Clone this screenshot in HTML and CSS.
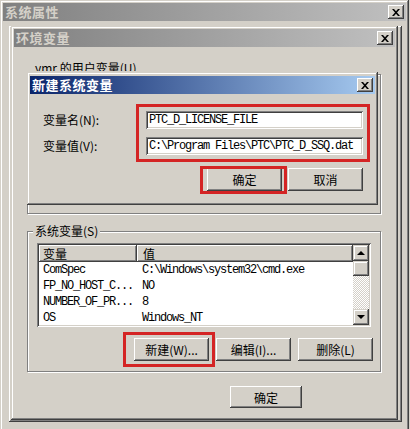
FILE: index.html
```html
<!DOCTYPE html>
<html lang="zh-CN">
<head>
<meta charset="utf-8">
<title>环境变量</title>
<link rel="stylesheet" href="styles.css">
</head>
<body>
<div class="win outer">
  <div class="title inactive"><span class="ttext">系统属性</span><span class="xbtn"><svg width="8" height="7" viewBox="0 0 8 7"><path d="M0 0h2l2 2.2L6 0h2L5 3.5 8 7H6L4 4.8 2 7H0l3-3.5z" fill="#000"/></svg></span></div>
  <div class="outer-body"><div class="tabpanel"></div></div>
</div>

<div class="win env">
  <div class="title inactive"><span class="ttext">环境变量</span><span class="xbtn"><svg width="8" height="7" viewBox="0 0 8 7"><path d="M0 0h2l2 2.2L6 0h2L5 3.5 8 7H6L4 4.8 2 7H0l3-3.5z" fill="#000"/></svg></span></div>
  <div class="env-body">
    <div class="group user">
      <span class="legend">ymr 的用户变量(U)</span>
    </div>
    <div class="group sys">
      <span class="legend">系统变量(S)</span>
      <div class="list">
        <div class="list-main">
          <div class="hdr">
            <div class="hcell c1">变量</div>
            <div class="hcell c2">值</div>
          </div>
          <div class="row"><span class="c1 mono">ComSpec</span><span class="c2 mono">C:\Windows\system32\cmd.exe</span></div>
          <div class="row"><span class="c1 mono">FP_NO_HOST_C...</span><span class="c2 mono">NO</span></div>
          <div class="row"><span class="c1 mono">NUMBER_OF_PR...</span><span class="c2 mono">8</span></div>
          <div class="row"><span class="c1 mono">OS</span><span class="c2 mono">Windows_NT</span></div>
        </div>
        <div class="vscroll">
          <div class="sbtn"><span class="arr up"></span></div>
          <div class="thumb"></div>
          <div class="track"></div>
          <div class="sbtn"><span class="arr down"></span></div>
        </div>
      </div>
      <div class="btnrow">
        <div class="btn">新建<span class="half">(W)...</span></div>
        <div class="btn">编辑<span class="half">(I)...</span></div>
        <div class="btn">删除<span class="half">(L)</span></div>
      </div>
    </div>
    <div class="okrow"><div class="btn ok">确定</div></div>
  </div>
</div>

<div class="win dlg">
  <div class="title active"><span class="ttext">新建系统变量</span><span class="xbtn"><svg width="8" height="7" viewBox="0 0 8 7"><path d="M0 0h2l2 2.2L6 0h2L5 3.5 8 7H6L4 4.8 2 7H0l3-3.5z" fill="#000"/></svg></span></div>
  <div class="dlg-body">
    <div class="form">
      <label class="lbl">变量名<span class="half">(N):</span></label>
      <div class="input mono">PTC_D_LICENSE_FILE</div>
      <label class="lbl">变量值<span class="half">(V):</span></label>
      <div class="input mono">C:\Program Files\PTC\PTC_D_SSQ.dat</div>
    </div>
    <div class="dlg-btns">
      <div class="btn">确定</div>
      <div class="btn">取消</div>
    </div>
  </div>
</div>

<div class="mark m1"></div>
<div class="mark m2"></div>
<div class="mark m3"></div>
</body>
</html>
```

FILE: styles.css
```css
* { box-sizing: border-box; }
html, body { margin: 0; padding: 0; }
body {
  width: 410px;
  height: 429px;
  overflow: hidden;
  position: relative;
  background: #d4d0c8;
  font-family: "Noto Sans CJK SC", "Liberation Sans", sans-serif;
  font-size: 12px;
  color: #000;
}

/* classic window frame */
.win {
  position: absolute;
  background: #d4d0c8;
  padding: 3px;
  display: flex;
  flex-direction: column;
  box-shadow: inset -1px -1px #404040, inset 1px 1px #d4d0c8,
              inset -2px -2px #808080, inset 2px 2px #fff;
}
.outer { left: 0; top: 0; width: 409px; height: 431px; }
.env { left: 11px; top: 26px; width: 387px; height: 394px; }
.dlg { left: 27px; top: 72px; width: 351px; height: 133px; }
.dlg .title { margin-top: 1px; }

.title {
  flex: none;
  height: 18px;
  display: flex;
  align-items: center;
  justify-content: space-between;
  padding: 0 2px 0 2px;
}
.ttext { font-weight: bold; font-size: 13px; line-height: 18px; letter-spacing: 0.5px; }
.inactive { background: linear-gradient(90deg, #808080, #c0c0c0); color: #d4d0c8; }
.active { background: linear-gradient(90deg, #0a246a, #a6caf0); color: #fff; }

.xbtn {
  width: 16px;
  height: 14px;
  background: #d4d0c8;
  display: flex;
  align-items: center;
  justify-content: center;
  box-shadow: inset -1px -1px #404040, inset 1px 1px #fff, inset -2px -2px #808080;
}
.xbtn svg { display: block; }

.outer-body { flex: 1; padding: 5px 4px 6px 6px; display: flex; }
.tabpanel {
  flex: 1;
  box-shadow: inset -1px -1px #404040, inset 1px 1px #fff, inset -2px -2px #808080;
}

/* env body */
.env-body {
  flex: 1;
  display: flex;
  flex-direction: column;
  padding: 27px 14px 0 13px;
}
.group {
  position: relative;
  border: 1px solid #808080;
  box-shadow: inset 1px 1px #fff, 1px 1px #fff;
}
.legend {
  position: absolute;
  top: -9px;
  left: 5px;
  padding: 0 2px;
  background: #d4d0c8;
  line-height: 16px;
  white-space: nowrap;
}
.user { height: 140px; }
.user .legend { top: -15px; height: 11px; overflow: hidden; }
.sys {
  height: 141px;
  margin-top: 17px;
  padding: 11px 8px 0 9px;
  display: flex;
  flex-direction: column;
}

.mono {
  font-family: "Liberation Mono", "DejaVu Sans Mono", monospace;
  font-size: 12px;
  letter-spacing: -1.2px;
}
.half { font-size: 12px; }

.list {
  height: 84px;
  width: 334px;
  background: #fff;
  padding: 2px;
  display: flex;
  box-shadow: inset 1px 1px #808080, inset -1px -1px #fff,
              inset 2px 2px #404040, inset -2px -2px #d4d0c8;
}
.list-main { flex: 1; display: flex; flex-direction: column; overflow: hidden; }
.hdr { display: flex; height: 17px; flex: none; }
.hcell {
  background: #d4d0c8;
  line-height: 17px;
  padding-left: 4px;
  box-shadow: inset -1px -1px #404040, inset 1px 1px #fff, inset -2px -2px #808080;
}
.hcell.c1 { width: 98px; }
.hcell.c2 { flex: 1; padding-left: 6px; }
.row { display: flex; height: 16px; line-height: 16px; }
.row .c1 { width: 98px; padding-left: 4px; white-space: nowrap; }
.row .c2 { padding-left: 5px; white-space: nowrap; }

.vscroll {
  width: 16px;
  flex: none;
  display: flex;
  flex-direction: column;
}
.sbtn, .thumb {
  height: 16px;
  flex: none;
  background: #d4d0c8;
  display: flex;
  align-items: center;
  justify-content: center;
  box-shadow: inset -1px -1px #404040, inset 1px 1px #d4d0c8,
              inset -2px -2px #808080, inset 2px 2px #fff;
}
.thumb { height: 15px; }
.track {
  flex: 1;
  background: repeating-conic-gradient(#fff 0 25%, #d4d0c8 0 50%) 0 0 / 2px 2px;
}
.arr { width: 0; height: 0; border-left: 4px solid transparent; border-right: 4px solid transparent; }
.arr.up { border-bottom: 4px solid #000; }
.arr.down { border-top: 4px solid #000; }

.btn {
  width: 75px;
  height: 23px;
  background: #d4d0c8;
  display: flex;
  align-items: center;
  justify-content: center;
  white-space: nowrap;
  box-shadow: inset -1px -1px #404040, inset 1px 1px #fff, inset -2px -2px #808080;
}
.btnrow {
  display: flex;
  gap: 7px;
  justify-content: flex-end;
  margin-top: 11px;
  margin-right: -1px;
}
.okrow { display: flex; padding-left: 203px; margin-top: 14px; }
.btn.ok { width: 72px; height: 22px; }

/* dialog body */
.dlg-body { flex: 1; padding: 17px 12px 0 13px; display: flex; flex-direction: column; }
.form {
  display: grid;
  grid-template-columns: 103px 217px;
  row-gap: 8px;
  align-items: center;
}
.lbl { line-height: 18px; }
.input {
  height: 18px;
  line-height: 15px;
  padding: 2px 3px 0;
  background: #fff;
  white-space: nowrap;
  overflow: hidden;
  box-shadow: inset 1px 1px #808080, inset -1px -1px #fff,
              inset 2px 2px #404040, inset -2px -2px #d4d0c8;
}
.dlg-btns { display: flex; gap: 6px; justify-content: flex-end; margin-top: 13px; }

/* red annotation boxes */
.mark { position: absolute; border: 3px solid #d42424; }
.m1 { left: 136px; top: 104px; width: 234px; height: 58px; }
.m2 { left: 200px; top: 166px; width: 87px; height: 28px; }
.m3 { left: 123px; top: 332px; width: 92px; height: 35px; }
```
